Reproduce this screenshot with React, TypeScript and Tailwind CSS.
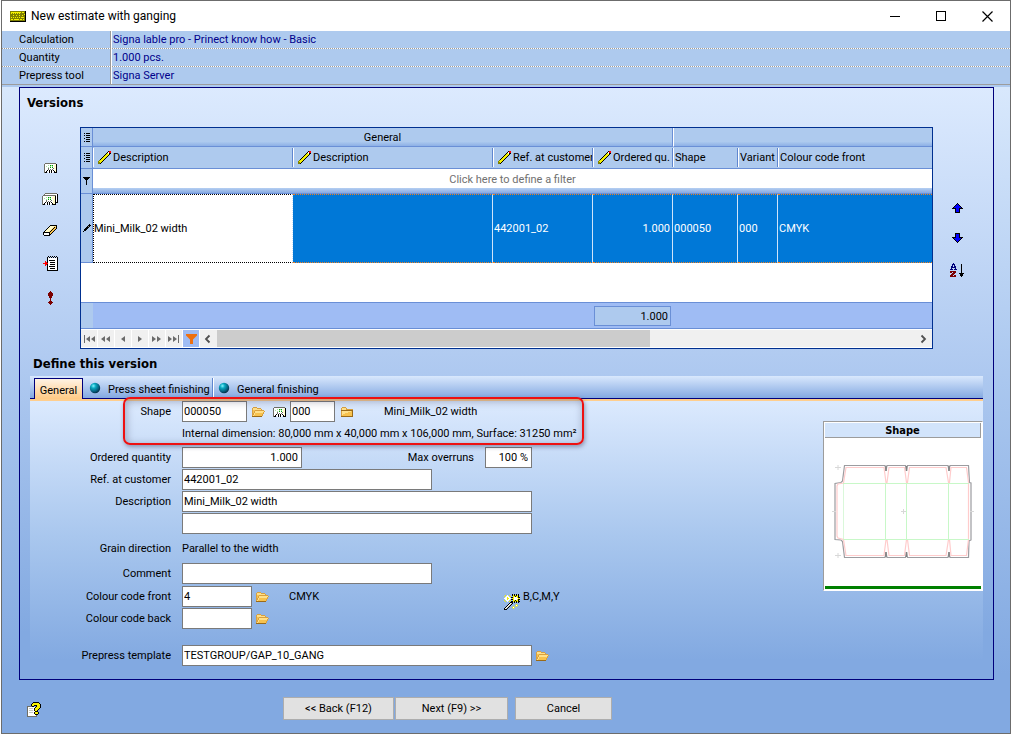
import React from "react";

const PALETTE: Record<string, string> = {
  k: "#000000",
  w: "#ffffff",
  g: "#6f6f66",
  l: "#c4c8c0",
  y: "#f4f000",
  c: "#fffbc8",
  o: "#808000",
  r: "#ff0000",
  m: "#7b0000",
  n: "#00007b",
  b: "#0000ff",
  G: "#00a000",
  L: "#a6e6a0",
  t: "#d8a040",
  u: "#ffe08a",
  v: "#f7c24e",
  x: "#9a6a18",
  s: "#8d8d8d",
};

function Pixels({ rows }: { rows: string[] }) {
  const width = Math.max(...rows.map((r) => r.length));
  const cells: React.ReactNode[] = [];
  rows.forEach((row, y) => {
    for (let x = 0; x < row.length; x++) {
      const fill = PALETTE[row[x]];
      if (fill) cells.push(<rect key={`${x}-${y}`} x={x} y={y} width={1} height={1} fill={fill} />);
    }
  });
  return (
    <svg
      width={width}
      height={rows.length}
      viewBox={`0 0 ${width} ${rows.length}`}
      shapeRendering="crispEdges"
      className="block shrink-0"
      aria-hidden="true"
    >
      {cells}
    </svg>
  );
}

const BOX = [
  " ggggggggggg ",
  "gwwwwwwwwwwck",
  "gwwwLwGLGwcck",
  "gwLwwwLwLwcck",
  "gwwwLwGwGwcck",
  "gwwwgwwwwgcck",
  "gwwwgwgwgwwck",
  "gwwkwkwkwkwck",
  "gwkwwkwkwwkck",
  "gkk wkwkw kkk",
];
const BOXES = [
  "   gggggggggggg ",
  "  gwwwwwwwwwwwwk",
  " gggggggggggggwk",
  "gwwwwwwwwwwcckwk",
  "gwwwLwGLGwccckwk",
  "gwLwwwLwLwccckwk",
  "gwwwLwGwGwwcckwk",
  "gwwwgwwwwgwcckwk",
  "gwwwgwgwgwwcckwk",
  "gwwkwkwkwkwcckkk",
  "gwkwwkwkwwkcck  ",
  "gkk wkwkw kkkk  ",
];
const ERASER = [
  "       kkkkkkk",
  "      kccccuuk",
  "     kccccukvk",
  "    kccccukvvk",
  "   kccccukvvk ",
  "  kccccukvvk  ",
  " kccccukvvk   ",
  "kkkkkkkvvk    ",
  "kwwwwwkvk     ",
  "kwwwwwkk      ",
  " kkkkkk       ",
];
const NOTE = [
  "     k k k k k ",
  "    k k k k k k",
  "    kwwwwwwwwwk",
  "    kwwwwwwwwwk",
  "    kwkkkkkkwwk",
  "  r kwwwwwwwwwk",
  "  rrkwwkkkkkwwk",
  "rrrrrwwwwwwwwwk",
  "  rrkwwkkkkkwwk",
  "  r kwwwwwwwwwk",
  "    kwkkkkkkwwk",
  "    kwwwwwwwwwk",
  "    kwwkkkkkwwk",
  "    kwwwwwwwwwk",
  "    kkkkkkkkkkk",
];
const BANG = [
  "  m  ",
  " mmm ",
  "mmmmm",
  "mmmmm",
  "mmmmm",
  " mmm ",
  " mmm ",
  "  m  ",
  "  m  ",
  "  m  ",
  " mmm ",
  "mmmmm",
  " mmm ",
  "  m  ",
];
const PENCIL = [
  "          krr",
  "         kwrr",
  "        kywkk",
  "       kyyyk ",
  "      kyyyk  ",
  "     kyyyk   ",
  "    kyyyk    ",
  "   kyyyk     ",
  "  kyyyk      ",
  " oyyyk       ",
  "oyyyk        ",
  "ooyk         ",
  "ook          ",
];
const MARKER = [
  "      k ",
  "     kkk",
  "    ksk ",
  "   kkk  ",
  "  kkk   ",
  " kkk    ",
  " kk     ",
  "k       ",
];
const LINES = ["k kkkk", "      ", "k kkkk", "      ", "  kkkk", "k     ", "  kkkk", "      ", "k kkkk"];
const FUNNEL = ["kkkkkkk", " kkkkk ", "  kkk  ", "   k   ", "   k   ", "   k   ", "   k   ", "   k   "];
const ARROW_UP = [
  "     k     ",
  "    kbk    ",
  "   kbbbk   ",
  "  kbbbbbk  ",
  " kbbbbbbbk ",
  "kkkkbbbkkkk",
  "   kbbbk   ",
  "   kbbbk   ",
  "   kbbbk   ",
  "   kkkkk   ",
];
const ARROW_DOWN = [...ARROW_UP].reverse();
const SORT = [
  "   n           ",
  "  nnn      k   ",
  "  n n      k   ",
  " nn nn     k   ",
  " nnnnn     k   ",
  " n   n     k   ",
  "nnn nnn    k   ",
  "           k   ",
  "mmmmmm     k   ",
  "mm mmm     k   ",
  "  mmm    kkkkk ",
  " mmm      kkk  ",
  "mmm mm    kkk  ",
  "mmmmmm     k   ",
];
const FOLDER_OPEN = [
  " tttt        ",
  "tuuuutttt    ",
  "tuuuuuuuut   ",
  "tvvttttttttt ",
  "tvtuuuuuuuuut",
  "tvtuuuuuuuut ",
  "ttuvvvvvvvvt ",
  "ttuvvvvvvvt  ",
  "tuvvvvvvvvt  ",
  "xxxxxxxxxx   ",
];
const FOLDER = [
  " tttt       ",
  "tuuuut      ",
  "tuuuuttttttt",
  "xxxxxxxxxxxx",
  "tuuuuuuuuuvx",
  "tuuuuuuvvvvx",
  "tuuuvvvvvvvx",
  "tuvvvvvvvvvx",
  "tvvvvvvvvvvx",
  "xxxxxxxxxxxx",
];
const WAND = [
  "        k k k k ",
  " y w y  kykykyk ",
  "y www y  yykyyk ",
  " wwyww kkywwwykk",
  "wwwyyww yywwwwyy",
  " wwyww kkywwwykk",
  "y www y  yykyyk ",
  " y w y kkykykykk",
  "      kkk k k k ",
  "     kwlk       ",
  "    kwlk    y   ",
  "   kwlk    ywy  ",
  "  kwlk   y  y   ",
  " kwlk   ywy     ",
  "kwlk     y      ",
  "kkk             ",
];
const HELP = [
  "      kkkkkk   ",
  "     kyyyyyyk  ",
  "    kyyyyyyyyk ",
  "    kyykkkyyyk ",
  "gggggkk  kyyyk ",
  "gwwwwwwwkyyyyk ",
  "gwllllwkyyyyk  ",
  "gwwwwwwkyyyk   ",
  "gwllllwkyyk    ",
  "gwwwwwwwkkk    ",
  "gwllllwkyyyk   ",
  "gwwwwwwkyyyk   ",
  "gwwwwwwwkkk    ",
  "gwwwwwwwwg     ",
  "gggggggggg     ",
];
const KEYBOARD = [
  "oooooooooooooook",
  "oyyyyyyyyyyoyyok",
  "oyoyoyoyoyoooook",
  "ooooooooooooooyk",
  "oooyooyooyooyook",
  "oooooooooooooook",
  "oyoyoyoyoyoyyyok",
  "oooooooooooooook",
  "oyyoyyyyyoyyoyok",
  "oooooooooooooook",
  "kkkkkkkkkkkkkkkk",
];

function Field({
  id,
  label,
  value = "",
  width,
  align = "",
  children,
}: {
  id: string;
  label: string;
  value?: string;
  width: string;
  align?: string;
  children?: React.ReactNode;
}) {
  return (
    <div className="flex h-[21px] items-center">
      <label htmlFor={id} className="w-[141px] shrink-0 text-right">
        {label}
      </label>
      <TextBox id={id} value={value} className={`ml-[11px] ${width} ${align}`} />
      {children}
    </div>
  );
}

function TextBox({ id, value, className, label }: { id: string; value: string; className: string; label?: string }) {
  return (
    <input
      id={id}
      aria-label={label}
      defaultValue={value}
      className={`h-[21px] shrink-0 border border-[#7a7a7a] bg-white pr-[3px] pb-px pl-px outline-none ${className}`}
    />
  );
}

function IconButton({ label, rows, className = "" }: { label: string; rows: string[]; className?: string }) {
  return (
    <button type="button" aria-label={label} className={`block shrink-0 ${className}`}>
      <Pixels rows={rows} />
    </button>
  );
}

function InfoRow({ label, value, last = false }: { label: string; value: string; last?: boolean }) {
  return (
    <>
      <div className="flex h-[17px] items-center">
        <div className="h-full w-[109px] shrink-0 border-r border-[#9a9a9a] pl-[17px] leading-[18px]">{label}</div>
        <div className="h-full grow border-l border-white pl-px leading-[18px] text-[#00008b]">{value}</div>
      </div>
      {last ? (
        <div className="h-px bg-[#9c9c9c]" />
      ) : (
        <div className="h-px bg-[repeating-linear-gradient(90deg,#a39c94_0_1px,#ffffff_1px_2px)]" />
      )}
    </>
  );
}

function HeaderCell({ text, editable = false, last = false }: { text: string; editable?: boolean; last?: boolean }) {
  return (
    <th className="h-[22px] border-b border-[#6a8fd6] bg-[#aecaee] p-0 text-left font-normal">
      <div
        className={`flex h-[19px] items-center overflow-hidden whitespace-nowrap ${
          editable ? "gap-[2px] pl-[5px]" : "pl-[2px]"
        } ${last ? "" : "border-r border-[#5f86cf]"} shadow-[inset_1px_0_0_#ffffff]`}
      >
        {editable && <Pixels rows={PENCIL} />}
        <span className="pt-px">{text}</span>
      </div>
    </th>
  );
}

const NAV: { label: string; d: string }[] = [
  { label: "First record", d: "M3 4h1v8H3zM9 5v6L5 8zM14 5v6l-4-3z" },
  { label: "Previous page", d: "M7 5v6L3 8zM12 5v6L8 8z" },
  { label: "Previous record", d: "M10 5v6L6 8z" },
  { label: "Next record", d: "M6 5v6l4-3z" },
  { label: "Next page", d: "M3 5v6l4-3zM8 5v6l4-3z" },
  { label: "Last record", d: "M2 5v6l4-3zM7 5v6l4-3zM12 4h1v8h-1z" },
];

function Sphere() {
  return (
    <svg width="12" height="12" viewBox="0 0 12 12" className="block shrink-0" aria-hidden="true">
      <defs>
        <radialGradient id="sphere" cx="0.35" cy="0.3" r="0.75">
          <stop offset="0" stopColor="#7ff4ff" />
          <stop offset="0.3" stopColor="#08a8c0" />
          <stop offset="0.7" stopColor="#056080" />
          <stop offset="1" stopColor="#022840" />
        </radialGradient>
      </defs>
      <circle cx="6" cy="6" r="5.2" fill="url(#sphere)" />
    </svg>
  );
}

function Carton() {
  const outline =
    "M20.500 29.500H61L62 35L63 29.500H81.500L82.500 35L83.500 29.500H124L125 35L126 29.500H144.500L145.500 46.500L147 47V104L145 105L144.500 121.500H126L125 116L124 121.500H83.500L82.500 116L81.500 121.500H63L62 116L61 121.500H20.500L18.500 105.500L17 104L11 103.500V47.500L17 46.500L18.500 45Z";
  const cut =
    "M22 31.500H60L62 46.500H63L65 31.500H80.500L82.500 46.500H83.500L85.500 31.500H122L124.500 46.500H125.500L127 31.500H142.500L144.500 46.500V103.500L142.500 119.500H127L125.500 103.500H124.500L122 119.500H85.500L83.500 103.500H82.500L80.500 119.500H65L63 103.500H62L60 119.500H22L19.500 103.500L14 102L13 100V50L14 48L19.500 47Z";
  return (
    <svg viewBox="0 2 158 148" className="block h-[148px] w-full" aria-label="Carton outline" role="img">
      <path d={outline} fill="none" stroke="#9c9ca0" strokeWidth="1.200" />
      <path d={cut} fill="none" stroke="#ffcccc" strokeWidth="1.200" />
      <path d="M19.500 47.500H145M19.500 103.500H145M61.500 47.500V103.500M82.500 47.500V103.500M124.500 47.500V103.500" stroke="#c8f8c8" fill="none" />
      <path d="M19.500 47.500V103.500" stroke="#b4f0b4" strokeDasharray="1 1" fill="none" />
      <path d="M62 30V35M82.500 30V35M125 30V35M62 116V121M82.500 116V121M125 116V121" stroke="#808080" strokeWidth="1.400" />
      <path
        d="M11 31.500H17M14 29V34M77 75.500H82M79.500 73V78M11 119.500H17M14 117V122M8 75.500H12M146 75.500H150"
        stroke="#d8d8d8"
      />
    </svg>
  );
}

const cellLine = "border-r border-r-[#cfe4fa]";
const cellBase =
  "border-t border-b border-y-[#f08020] bg-[#0078d7] p-0 text-white [border-style:dotted_solid_dotted_solid]";

export default function App() {
  return (
    <div className="min-h-screen bg-white pb-px pl-px font-['Roboto','DejaVu_Sans_Condensed',sans-serif] text-[11px] leading-[14px] text-black">
      <div className="flex min-h-[calc(100vh-1px)] flex-col border border-[#6c6c6c] bg-[linear-gradient(180deg,#d8e8fc_12%,#aecaf0_48%,#82a9e1_92%)]">
        <header className="flex h-[30px] shrink-0 items-center bg-white pl-[8px]">
          <Pixels rows={KEYBOARD} />
          <h1 className="grow pl-[5px] text-[12px]">New estimate with ganging</h1>
          <button type="button" aria-label="Minimize" className="flex h-full w-[46px] items-center justify-center">
            <svg width="10" height="10" viewBox="0 0 10 10" shapeRendering="crispEdges">
              <path d="M0 5.500H10" stroke="#000" />
            </svg>
          </button>
          <button type="button" aria-label="Maximize" className="flex h-full w-[46px] items-center justify-center">
            <svg width="10" height="10" viewBox="0 0 10 10" shapeRendering="crispEdges">
              <rect x="0.500" y="0.500" width="9" height="9" fill="none" stroke="#000" />
            </svg>
          </button>
          <button type="button" aria-label="Close" className="flex h-full w-[46px] items-center justify-center">
            <svg width="11" height="11" viewBox="0 0 11 11">
              <path d="M0.500 0.500L10.500 10.500M10.500 0.500L0.500 10.500" stroke="#000" strokeWidth="1.200" />
            </svg>
          </button>
        </header>

        <section className="shrink-0 bg-[#aecaee] pb-[2px]">
          <InfoRow label="Calculation" value="Signa lable pro - Prinect know how - Basic" />
          <InfoRow label="Quantity" value="1.000 pcs." />
          <InfoRow label="Prepress tool" value="Signa Server" last />
        </section>

        <main className="ml-[17px] mr-[16px] flex grow flex-col border border-[#00007b] bg-[linear-gradient(180deg,#dceafe_0%,#b1cbf1_45%,#82a9e1_92%)]">
          <h2 className="h-[39px] pl-[7px] font-['DejaVu_Sans_Condensed','DejaVu_Sans',sans-serif] text-[13px] leading-[29px] font-bold">
            Versions
          </h2>

          <div className="flex">
            <div className="flex w-[60px] shrink-0 flex-col items-center gap-[20px] pt-[36px]">
              <IconButton label="Add shape" rows={BOX} />
              <IconButton label="Copy shape" rows={BOXES} />
              <IconButton label="Erase" rows={ERASER} />
              <IconButton label="Insert from list" rows={NOTE} />
              <IconButton label="Show warnings" rows={BANG} />
            </div>

            <div className="min-w-0 grow border border-[#003090] bg-white">
              <table className="w-full table-fixed border-separate border-spacing-0">
                <colgroup>
                  <col className="w-[12px]" />
                  <col className="w-[200px]" />
                  <col className="w-[200px]" />
                  <col className="w-[100px]" />
                  <col className="w-[80px]" />
                  <col className="w-[65px]" />
                  <col className="w-[40px]" />
                  <col />
                </colgroup>
                <thead>
                  <tr>
                    <th className="h-[19px] border-r border-b border-[#6a8fd6] bg-[#aecaee] p-0 pl-[3px]">
                      <Pixels rows={LINES} />
                    </th>
                    <th
                      colSpan={4}
                      className="h-[19px] border-r border-b border-[#6a8fd6] bg-[linear-gradient(180deg,#aecaee_75%,#8db0e6)] p-0 pt-[2px] text-center font-normal"
                    >
                      General
                    </th>
                    <th
                      colSpan={3}
                      className="h-[19px] border-b border-l border-[#6a8fd6] border-l-white bg-[linear-gradient(180deg,#aecaee_75%,#8db0e6)] p-0"
                    />
                  </tr>
                  <tr>
                    <th className="h-[22px] border-r border-b border-[#6a8fd6] bg-[#aecaee] p-0 pl-[3px]">
                      <Pixels rows={LINES} />
                    </th>
                    <HeaderCell text="Description" editable />
                    <HeaderCell text="Description" editable />
                    <HeaderCell text="Ref. at customer" editable />
                    <HeaderCell text="Ordered qu." editable />
                    <HeaderCell text="Shape" />
                    <HeaderCell text="Variant" />
                    <HeaderCell text="Colour code front" last />
                  </tr>
                </thead>
                <tbody>
                  <tr>
                    <td className="h-[25px] border-r border-b border-[#6a8fd6] bg-[#aecaee] p-0 pl-[2px]">
                      <Pixels rows={FUNNEL} />
                    </td>
                    <td
                      colSpan={7}
                      className="h-[25px] border-b border-[#6a8fd6] bg-[linear-gradient(180deg,#fff_19px,#b5cff2_19px,#86a9e2_24px)] p-0 pb-[3px] text-center text-[#707070]"
                    >
                      Click here to define a filter
                    </td>
                  </tr>
                  <tr>
                    <td className="h-[69px] border-r border-b border-[#6a8fd6] bg-[#aecaee] p-0 pl-[2px]">
                      <Pixels rows={MARKER} />
                    </td>
                    <td className="h-[69px] border border-dotted border-black border-r-[#cfe4fa] bg-white p-0">
                      Mini_Milk_02 width
                    </td>
                    <td className={`${cellBase} ${cellLine}`} />
                    <td className={`${cellBase} ${cellLine} pl-px`}>442001_02</td>
                    <td className={`${cellBase} ${cellLine} pr-[2px] text-right`}>1.000</td>
                    <td className={`${cellBase} ${cellLine} pl-px`}>000050</td>
                    <td className={`${cellBase} ${cellLine} pl-px`}>000</td>
                    <td className={`${cellBase} pl-px`}>CMYK</td>
                  </tr>
                  <tr>
                    <td colSpan={8} className="h-[40px] border-b border-[#6a8fd6] bg-white p-0" />
                  </tr>
                </tbody>
                <tfoot>
                  <tr>
                    <td className="h-[26px] border-b border-[#6a8fd6] bg-[#aecaee] p-0" />
                    <td colSpan={3} className="border-b border-[#6a8fd6] bg-[#9fbcf4] p-0" />
                    <td className="border-b border-[#6a8fd6] bg-[#9fbcf4] py-0 pr-[2px] pl-px">
                      <div className="h-[20px] border border-[#6a8fd6] bg-[#aecaee] pr-[2px] text-right leading-[20px]">
                        1.000
                      </div>
                    </td>
                    <td colSpan={3} className="border-b border-[#6a8fd6] bg-[#9fbcf4] p-0" />
                  </tr>
                </tfoot>
              </table>

              <div className="flex h-[19px] items-stretch bg-white py-px">
                {NAV.map((n) => (
                  <button key={n.label} type="button" aria-label={n.label} className="mr-px w-[16px] shrink-0 bg-[#f0f0f0]">
                    <svg width="16" height="16" viewBox="0 0 16 16" className="block">
                      <path d={n.d} fill="#6a6a6a" />
                    </svg>
                  </button>
                ))}
                <button type="button" aria-label="Filter" className="mr-px w-[16px] shrink-0 bg-[#9fbcf4]">
                  <svg width="16" height="16" viewBox="0 0 16 16" className="block">
                    <path d="M3 3h11v1.500l-4 4V13l-3 0V8.500l-4-4z" fill="#ee7010" />
                  </svg>
                </button>
                <button type="button" aria-label="Scroll left" className="w-[17px] shrink-0 bg-[#f0f0f0]">
                  <svg width="16" height="16" viewBox="0 0 16 16" className="block">
                    <path d="M9.500 4.500L6 8l3.500 3.500" fill="none" stroke="#505050" strokeWidth="1.800" />
                  </svg>
                </button>
                <div className="grow bg-[#f0f0f0]">
                  <div className="h-full w-[62%] bg-[#cccccc]" />
                </div>
                <button type="button" aria-label="Scroll right" className="w-[17px] shrink-0 bg-[#f0f0f0]">
                  <svg width="16" height="16" viewBox="0 0 16 16" className="block">
                    <path d="M6.500 4.500L10 8l-3.500 3.500" fill="none" stroke="#505050" strokeWidth="1.800" />
                  </svg>
                </button>
              </div>
            </div>

            <div className="flex w-[60px] shrink-0 flex-col items-center gap-[20px] pt-[76px] pr-[11px]">
              <IconButton label="Move up" rows={ARROW_UP} />
              <IconButton label="Move down" rows={ARROW_DOWN} />
              <IconButton label="Sort" rows={SORT} />
            </div>
          </div>

          <h2 className="h-[27px] pl-[13px] font-['DejaVu_Sans_Condensed','DejaVu_Sans',sans-serif] text-[13px] leading-[29px] font-bold">
            Define this version
          </h2>

          <div className="mx-[10px] mb-[7px] grow bg-[linear-gradient(180deg,#dceafe_8%,#a9c7ee_54%,#82a9e1_96%)]">
            <div
              role="tablist"
              className="flex h-[23px] items-end border-b border-[#00007b] bg-[linear-gradient(180deg,#d9e8fd,#84a9e1)] pl-[4px]"
            >
              <button
                type="button"
                role="tab"
                aria-selected="true"
                className="-mb-px h-[21px] w-[49px] border border-b-0 border-[#00007b] bg-[linear-gradient(180deg,#fff3e4,#ffca85)] pt-[3px]"
              >
                General
              </button>
              <button
                type="button"
                role="tab"
                aria-selected="false"
                className="flex h-[20px] w-[130px] items-center gap-[7px] pl-[6px] whitespace-nowrap shadow-[inset_-1px_0_0_#5f86cf]"
              >
                <Sphere />
                <span className="pt-[3px]">Press sheet finishing</span>
              </button>
              <button
                type="button"
                role="tab"
                aria-selected="false"
                className="flex h-[20px] items-center gap-[7px] pl-[5px] whitespace-nowrap shadow-[inset_1px_0_0_#ffffff]"
              >
                <Sphere />
                <span className="pt-[3px]">General finishing</span>
              </button>
            </div>

            <div className="relative flex items-start justify-between border-t-2 border-[#ffce8e]">
              <div className="pointer-events-none absolute top-[-4px] left-[93px] h-[48px] w-[461px] rounded-[7px] border-2 border-[#ee1111] shadow-[1px_2px_4px_rgba(60,60,90,0.45),inset_1px_2px_8px_rgba(60,60,90,0.4)]" />

              <form className="flex flex-col gap-px" onSubmit={(e) => e.preventDefault()}>
                <Field id="shape" label="Shape" value="000050" width="w-[65px]">
                  <IconButton label="Choose shape" rows={FOLDER_OPEN} className="ml-[5px]" />
                  <IconButton label="Show shape" rows={BOX} className="ml-[8px]" />
                  <TextBox id="variant" label="Variant" value="000" className="ml-[4px] w-[45px]" />
                  <IconButton label="Choose variant" rows={FOLDER} className="ml-[6px]" />
                  <span className="ml-[31px]">Mini_Milk_02 width</span>
                </Field>
                <p className="h-[23px] pt-[4px] pl-[152px] whitespace-nowrap">
                  Internal dimension: 80,000 mm x 40,000 mm x 106,000 mm, Surface: 31250 mm²
                </p>
                <Field id="quantity" label="Ordered quantity" value="1.000" width="w-[120px]" align="text-right">
                  <label htmlFor="overruns" className="w-[172px] text-right">
                    Max overruns
                  </label>
                  <TextBox id="overruns" value="100 %" className="ml-[11px] w-[47px] text-right" />
                </Field>
                <Field id="reference" label="Ref. at customer" value="442001_02" width="w-[250px]" />
                <Field id="description" label="Description" value="Mini_Milk_02 width" width="w-[350px]" />
                <TextBox id="description2" label="Description, line 2" value="" className="ml-[152px] w-[350px]" />
                <div className="flex h-[27px] items-center pt-px">
                  <span className="w-[141px] text-right">Grain direction</span>
                  <span className="ml-[11px]">Parallel to the width</span>
                </div>
                <Field id="comment" label="Comment" width="w-[250px]" />
                <div className="pt-px">
                  <Field id="front" label="Colour code front" value="4" width="w-[70px]">
                    <IconButton label="Choose front colours" rows={FOLDER_OPEN} className="ml-[4px]" />
                    <span className="ml-[20px] w-[215px]">CMYK</span>
                    <button type="button" aria-label="Detect colours" className="-mb-[10px]">
                      <Pixels rows={WAND} />
                    </button>
                    <span className="ml-[3px]">B,C,M,Y</span>
                  </Field>
                </div>
                <Field id="back" label="Colour code back" width="w-[70px]">
                  <IconButton label="Choose back colours" rows={FOLDER_OPEN} className="ml-[4px]" />
                </Field>
                <div className="pt-[15px]">
                  <Field id="template" label="Prepress template" value="TESTGROUP/GAP_10_GANG" width="w-[350px]">
                    <IconButton label="Choose template" rows={FOLDER_OPEN} className="ml-[4px]" />
                  </Field>
                </div>
              </form>

              <figure className="mt-[20px] w-[160px] shrink-0 border border-[#9c9c9c] border-r-white border-b-white bg-white font-['DejaVu_Sans_Condensed','DejaVu_Sans',sans-serif]">
                <figcaption className="m-px mb-0 h-[15px] border-r border-b border-[#9c9c9c] bg-[#d2e4fb] text-center leading-[15px] font-bold">
                  Shape
                </figcaption>
                <Carton />
                <div className="mx-px mb-px h-[3px] bg-[#008000]" />
              </figure>
            </div>
          </div>
        </main>

        <footer className="flex h-[53px] shrink-0 items-center pl-[25px]">
          <IconButton label="Help" rows={HELP} className="mt-[6px] w-[256px]" />
          <div className="mt-[4px] flex">
            <button type="button" className="h-[23px] w-[111px] border border-[#adadad] bg-[#e1e1e1]">
              &lt;&lt; Back (F12)
            </button>
            <button type="button" className="ml-px h-[23px] w-[113px] border border-[#adadad] bg-[#e1e1e1]">
              Next (F9) &gt;&gt;
            </button>
            <button type="button" className="ml-[7px] h-[23px] w-[97px] border border-[#adadad] bg-[#e1e1e1]">
              Cancel
            </button>
          </div>
        </footer>
      </div>
    </div>
  );
}
